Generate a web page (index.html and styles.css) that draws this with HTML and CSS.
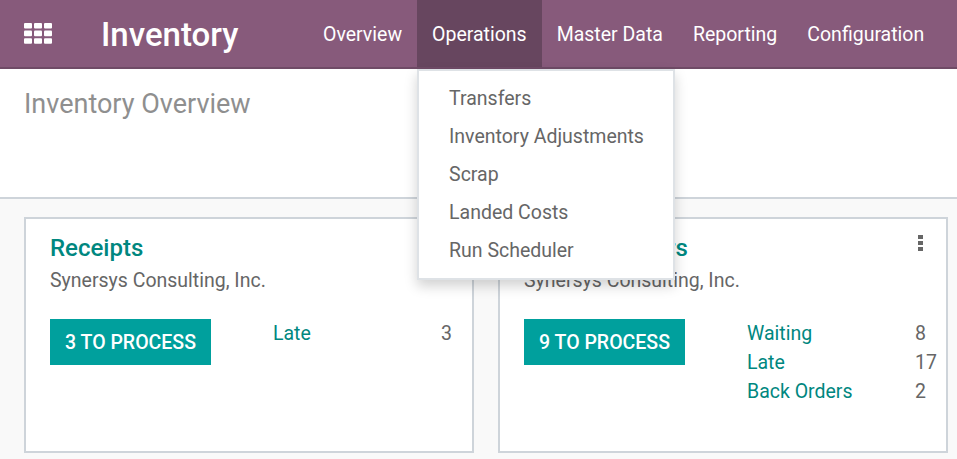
FILE: index.html
```html
<!doctype html>
<html lang="en-us">
<head>
<title>Inventory</title>
<meta http-equiv="Content-Type" content="text/html; charset=utf-8">
<link rel="stylesheet" href="styles.css">
</head>
<body>

<nav class="navbar">
  <a class="apps" href="#">
    <svg width="28" height="21" viewBox="0 0 28 21">
      <g fill="#fff">
        <rect x="0" y="0" width="8" height="5.6" rx="1"/><rect x="10" y="0" width="8" height="5.6" rx="1"/><rect x="20" y="0" width="8" height="5.6" rx="1"/>
        <rect x="0" y="7.6" width="8" height="5.6" rx="1"/><rect x="10" y="7.6" width="8" height="5.6" rx="1"/><rect x="20" y="7.6" width="8" height="5.6" rx="1"/>
        <rect x="0" y="15.2" width="8" height="5.6" rx="1"/><rect x="10" y="15.2" width="8" height="5.6" rx="1"/><rect x="20" y="15.2" width="8" height="5.6" rx="1"/>
      </g>
    </svg>
  </a>
  <a class="brand" href="#">Inventory</a>
  <ul class="menu">
    <li><a href="#">Overview</a></li>
    <li class="open">
      <a href="#">Operations</a>
      <div class="dropdown">
        <a href="#">Transfers</a>
        <a href="#">Inventory Adjustments</a>
        <a href="#">Scrap</a>
        <a href="#">Landed Costs</a>
        <a href="#">Run Scheduler</a>
      </div>
    </li>
    <li><a href="#">Master Data</a></li>
    <li><a href="#">Reporting</a></li>
    <li><a href="#">Configuration</a></li>
  </ul>
</nav>

<div class="panel">
  <h2>Inventory Overview</h2>
</div>

<div class="board">

  <div class="card">
    <h3>Receipts</h3>
    <div class="company">Synersys Consulting, Inc.</div>
    <div class="row">
      <div class="action"><button>3 TO PROCESS</button></div>
      <div class="stats">
        <div class="stat"><a href="#">Late</a><span>3</span></div>
      </div>
    </div>
  </div>

  <div class="card">
    <b class="kebab"><i></i><i></i><i></i></b>
    <h3>Delivery Orders</h3>
    <div class="company">Synersys Consulting, Inc.</div>
    <div class="row">
      <div class="action"><button>9 TO PROCESS</button></div>
      <div class="stats">
        <div class="stat"><a href="#">Waiting</a><span>8</span></div>
        <div class="stat"><a href="#">Late</a><span>17</span></div>
        <div class="stat"><a href="#">Back Orders</a><span>2</span></div>
      </div>
    </div>
  </div>

</div>

</body>
</html>
```

FILE: styles.css
```css
html, body {
  margin: 0;
  padding: 0;
  height: 459px;
  overflow: hidden;
}
body {
  background: #f9f9f9;
  color: #666;
  font: 19.5px/29px Roboto, Arial, sans-serif;
}
a {
  text-decoration: none;
}
.navbar {
  display: flex;
  align-items: stretch;
  height: 67px;
  background: #875a7b;
  border-bottom: solid 2px #6f4b66;
  position: relative;
  z-index: 2;
}
.apps {
  display: flex;
  align-items: center;
  padding: 0 0 1px 24px;
  width: 77px;
  box-sizing: border-box;
}
.brand {
  color: #fff;
  font-size: 33px;
  font-weight: 500;
  line-height: 65px;
  padding: 2px 0 0 24px;
  width: 231px;
  box-sizing: border-box;
}
.menu {
  display: flex;
  margin: 0;
  padding: 0;
  list-style: none;
}
.menu > li {
  position: relative;
}
.menu > li > a {
  display: block;
  color: #fff;
  line-height: 65px;
  padding: 2px 15px 0 15px;
}
.menu > li.open > a {
  background: #67465f;
}
.dropdown {
  position: absolute;
  top: 69px;
  left: 0;
  width: 254px;
  padding: 9px 0 8px 0;
  background: #fff;
  border: solid 2px #dee2e6;
  box-shadow: 0 6px 12px rgba(0,0,0,0.18);
}
.dropdown a {
  display: block;
  color: #666;
  line-height: 38px;
  padding: 0 30px;
  white-space: nowrap;
}
.panel {
  height: 128px;
  background: #fff;
  border-bottom: solid 2px #ced4da;
}
.panel h2 {
  margin: 0;
  padding: 20px 0 0 24px;
  color: #8f8f8f;
  font-size: 27px;
  font-weight: 400;
  line-height: 30px;
}
.board {
  display: flex;
  gap: 24px;
  padding: 18px 0 0 24px;
}
.card {
  position: relative;
  width: 450px;
  height: 236px;
  box-sizing: border-box;
  padding: 14px 5px 0 24px;
  background: #fff;
  border: solid 2px #ced4da;
}
.card h3 {
  margin: 0;
  color: #00877f;
  font-size: 24px;
  font-weight: 500;
  line-height: 30px;
}
.company {
  margin: 3px 0 0 0;
  color: #666;
  line-height: 29px;
}
.row {
  display: flex;
  margin: 24px 0 0 0;
}
.action {
  width: 223px;
}
.action button {
  display: block;
  width: 161px;
  height: 46px;
  padding: 0;
  border: none;
  background: #00a09d;
  color: #fff;
  font: 500 19.5px Roboto, Arial, sans-serif;
}
.stats {
  flex: 1;
}
.stat {
  display: flex;
  justify-content: space-between;
}
.stat a {
  color: #00877f;
}
.stat span {
  width: 26px;
}
.kebab {
  position: absolute;
  top: 16px;
  right: 23px;
  display: flex;
  flex-direction: column;
  gap: 2px;
}
.kebab i {
  display: block;
  width: 5px;
  height: 4px;
  background: #666;
}
```
